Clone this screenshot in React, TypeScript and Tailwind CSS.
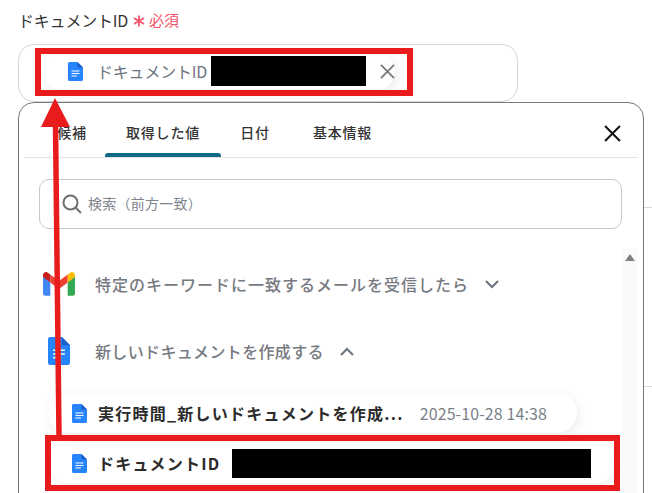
const DocIcon = ({ w = 15, h = 19 }: { w?: number; h?: number }) => (
  <svg width={w} height={h} viewBox="0 0 15 19" className="shrink-0">
    <path d="M1.5 0H9.5L15 5.5V17.5A1.5 1.5 0 0 1 13.5 19H1.5A1.5 1.5 0 0 1 0 17.5V1.5A1.5 1.5 0 0 1 1.5 0Z" fill="#2684fc" />
    <path d="M9.5 0L15 5.5H10.8A1.3 1.3 0 0 1 9.5 4.2Z" fill="#1a5fc7" />
    <path d="M3.5 9H11.5M3.5 11.5H11.5M3.5 14H9" stroke="#fff" strokeWidth="1.1" />
  </svg>
);

const Gmail = () => (
  <svg width="32" height="24" viewBox="0 0 32 24" className="shrink-0">
    <path d="M0 4V21.5A2.2 2.2 0 0 0 2.2 23.7H7.3V10.5Z" fill="#4285f4" />
    <path d="M24.7 10.5V23.7H29.8A2.2 2.2 0 0 0 32 21.5V4Z" fill="#34a853" />
    <path d="M7.3 10.5L16 17L24.7 10.5V2.5L16 9L7.3 2.5Z" fill="#ea4335" />
    <path d="M24.7 2.5V10.5L32 5V3.2C32 .5 28.9 -1 26.8 .9Z" fill="#fbbc04" />
    <path d="M0 5L7.3 10.5V2.5L5.2 .9C3.1 -1 0 .5 0 3.2Z" fill="#c5221f" />
  </svg>
);

const X = ({ size, color, sw }: { size: number; color: string; sw: number }) => (
  <svg width={size} height={size} viewBox="0 0 16 16" className="shrink-0">
    <path d="M1 1L15 15M15 1L1 15" stroke={color} strokeWidth={sw} fill="none" />
  </svg>
);

const Chevron = ({ up }: { up?: boolean }) => (
  <svg width="14" height="9" viewBox="0 0 14 9" className="shrink-0">
    <path d={up ? "M1 8L7 2L13 8" : "M1 1L7 7L13 1"} stroke="#6b7280" strokeWidth="2" fill="none" />
  </svg>
);

const Tab = ({ label, active, className }: { label: string; active?: boolean; className: string }) => (
  <div className={`relative flex h-full items-center justify-center whitespace-nowrap text-[14px] font-medium tracking-[0.8px] text-[#333333] ${className}`}>
    <span className="pt-[4px]">{label}</span>
    {active && <div className="absolute bottom-0 left-0 right-0 h-1 rounded-t-[3px] bg-[#0f6a85]" />}
  </div>
);

export default function App() {
  return (
    <div
      className="relative h-[493px] w-[652px] overflow-hidden whitespace-nowrap bg-white"
      style={{ fontFamily: '"Noto Sans CJK JP", "Noto Sans", sans-serif' }}
    >
      <div className="flex flex-col pl-[18px] pt-[9px]">
        <div className="flex h-[22px] items-center">
          <span className="text-[16px] leading-[22px] tracking-[-0.2px] text-[#333333]">ドキュメントID</span>
          <svg width="12" height="12" viewBox="0 0 12 12" className="ml-[5px] mt-[2px] shrink-0">
            <path d="M6 0.5V11.5M1 3L11 9M11 3L1 9" stroke="#f2546a" strokeWidth="1.8" fill="none" />
          </svg>
          <span className="ml-[4px] text-[15px] leading-[22px] text-[#f2546a]">必須</span>
        </div>

        <div className="mt-[13px] flex h-[58px] w-[500px] items-center rounded-2xl border border-[#d3d6dc] pb-[4px] pl-[24px]">
          <div className="flex h-[40px] w-[352px] items-center rounded-[20px] bg-white pl-[25px] shadow-[2px_3px_10px_rgba(0,0,0,0.08)]">
            <DocIcon />
            <span className="ml-[14px] text-[16px] tracking-[-0.2px] text-[#6b7280]">ドキュメントID</span>
            <div className="ml-[4px] h-[30px] w-[157px] bg-black" />
            <div className="ml-[14px]"><X size={15} color="#7c7c7c" sw={2} /></div>
          </div>
        </div>

        <div className="h-[625px] w-[626px] rounded-2xl border border-[#77797d] bg-white pl-[5px] pr-[5px]">
          <div className="flex h-[55px] items-stretch border-b border-[#e2e4e7] pr-[17px]">
            <Tab label="候補" className="ml-[34px] w-[28px]" />
            <Tab label="取得した値" active className="ml-[19px] w-[116px]" />
            <Tab label="日付" className="ml-[20px] w-[28px]" />
            <Tab label="基本情報" className="ml-[43px] w-[61px]" />
            <div className="ml-auto flex items-center pt-[6px]">
              <X size={17} color="#111111" sw={1.9} />
            </div>
          </div>

          <div className="ml-[15px] mt-[21px] flex h-[50px] w-[583px] items-center rounded-[10px] border border-[#c8cacd] pl-[22px]">
            <svg width="20" height="20" viewBox="0 0 20 20" className="shrink-0">
              <circle cx="8.5" cy="8.5" r="7" stroke="#6f6f6f" strokeWidth="2" fill="none" />
              <path d="M13.5 13.5L19 19" stroke="#6f6f6f" strokeWidth="2" />
            </svg>
            <span className="ml-[6px] pb-[2px] text-[14px] tracking-[0.25px] text-[#80858d]">検索（前方一致）</span>
          </div>

          <div className="flex">
            <div className="w-[598px] shrink-0 pt-[43px]">
              <div className="flex h-[24px] items-center pl-[19px]">
                <Gmail />
                <span className="ml-[20px] text-[16px] font-medium tracking-[1px] text-[#777a80]">特定のキーワードに一致するメールを受信したら</span>
                <span className="ml-[16px]"><Chevron /></span>
              </div>
              <div className="mt-[40px] flex h-[30px] items-center pl-[24px]">
                <DocIcon w={22} h={30} />
                <span className="ml-[25px] text-[16px] font-medium tracking-[0.35px] text-[#777a80]">新しいドキュメントを作成する</span>
                <span className="ml-[16px]"><Chevron up /></span>
              </div>
              <div className="ml-[24px] mt-[27px] flex h-[40px] w-[529px] items-center rounded-[20px] bg-white pl-[24px] shadow-[2px_3px_12px_rgba(0,0,0,0.08)]">
                <DocIcon />
                <span className="ml-[11px] text-[16px] font-bold tracking-[1.25px] text-[#2b2b2b]">実行時間_新しいドキュメントを作成...</span>
                <span className="ml-[16px] text-[16px] tracking-[0.1px] text-[#7b7f87]">2025-10-28 14:38</span>
              </div>
              <div className="ml-[26px] mt-[10px] flex h-[40px] w-[565px] items-center rounded-[20px] bg-white pl-[22px] shadow-[2px_3px_12px_rgba(0,0,0,0.06)]">
                <DocIcon />
                <span className="ml-[11px] w-[134px] text-[16px] font-bold tracking-[1.2px] text-[#2b2b2b]">ドキュメントID</span>
                <div className="h-[29px] w-[359px] bg-black" />
              </div>
            </div>
            <div className="mt-[20px] flex h-[300px] w-[15px] justify-center bg-[#fafafa] pt-[5px]">
              <div className="h-0 w-0 border-x-[5px] border-b-[7px] border-x-transparent border-b-[#808080]" />
            </div>
          </div>
        </div>
      </div>

      {/* Lines from the page behind the popup */}
      <div className="absolute left-[644px] top-[207px] h-px w-2 bg-[#d9d9d9]" />
      <div className="absolute left-[644px] top-[386px] h-px w-2 bg-[#d9d9d9]" />

      {/* Annotation overlays */}
      <div className="absolute left-[35px] top-[48px] h-[48px] w-[378px] border-[6px] border-[#e81c1c]" />
      <div className="absolute left-[45px] top-[435px] h-[56px] w-[575px] border-[6px] border-[#e81c1c]" />
      <svg width="652" height="493" viewBox="0 0 652 493" className="pointer-events-none absolute left-0 top-0">
        <path d="M55.5 125L59 436" stroke="#e81c1c" strokeWidth="5.5" fill="none" />
        <path d="M55 98L70 127H41Z" fill="#e81c1c" />
      </svg>
    </div>
  );
}
